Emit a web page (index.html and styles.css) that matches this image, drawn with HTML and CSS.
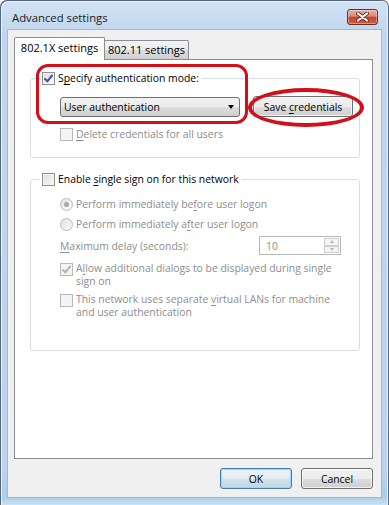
FILE: index.html
```html
<!DOCTYPE html>
<html lang="en">
<head>
    <meta charset="UTF-8">
    <meta name="viewport" content="width=device-width, initial-scale=1.0">
    <title>Advanced settings</title>
    <link rel="stylesheet" href="styles.css">
</head>
<body>

    <div class="window">
        <div class="titlebar">
            <span class="title">Advanced settings</span>
            <span class="close-btn">
                <svg width="13" height="10" viewBox="0 0 13 10">
                    <path d="M2 1.5 L11 8.5 M11 1.5 L2 8.5" stroke="#7a2a20" stroke-width="4" stroke-linecap="round"/>
                    <path d="M2 1.5 L11 8.5 M11 1.5 L2 8.5" stroke="#fff" stroke-width="2.2" stroke-linecap="round"/>
                </svg>
            </span>
        </div>

        <div class="client">
            <div class="tabs">
                <div class="tab tab-active">802.1X settings</div>
                <div class="tab">802.11 settings</div>
            </div>

            <div class="panel">
                <fieldset class="group group-auth">
                    <legend>
                        <span class="check">
                            <span class="box checked"></span>
                            <span>S<u>p</u>ecify authentication mode:</span>
                        </span>
                    </legend>
                    <div class="group-body">
                        <div class="mode-row">
                            <div class="combo">
                                <span>User authentication</span>
                                <span class="combo-arrow"></span>
                            </div>
                            <div class="btn btn-save"><span>Save <u>c</u>redentials</span></div>
                        </div>
                        <div class="check disabled row-delete">
                            <span class="box"></span>
                            <span><u>D</u>elete credentials for all users</span>
                        </div>
                    </div>
                </fieldset>

                <fieldset class="group group-sso">
                    <legend>
                        <span class="check">
                            <span class="box"></span>
                            <span>Enable <u>s</u>ingle sign on for this network</span>
                        </span>
                    </legend>
                    <div class="group-body">
                        <div class="check disabled">
                            <span class="radio selected"></span>
                            <span>Perform immediately be<u>f</u>ore user logon</span>
                        </div>
                        <div class="check disabled row-gap">
                            <span class="radio"></span>
                            <span>Perform immediately a<u>f</u>ter user logon</span>
                        </div>
                        <div class="delay-row disabled">
                            <span><u>M</u>aximum delay (seconds):</span>
                            <div class="spinner">
                                <span class="spinner-value">10</span>
                                <span class="spin-buttons">
                                    <span class="spin-up"></span>
                                    <span class="spin-down"></span>
                                </span>
                            </div>
                        </div>
                        <div class="check wrap disabled row-allow">
                            <span class="box checked"></span>
                            <span>A<u>l</u>low additional dialogs to be displayed during single<br>sign on</span>
                        </div>
                        <div class="check wrap disabled row-vlan">
                            <span class="box"></span>
                            <span>This network uses separate <u>v</u>irtual LANs for machine<br>and user authentication</span>
                        </div>
                    </div>
                </fieldset>

                <div class="mark mark-rect"></div>
                <div class="mark mark-oval"></div>
            </div>

            <div class="actions">
                <div class="btn btn-default"><span>OK</span></div>
                <div class="btn"><span>Cancel</span></div>
            </div>
        </div>
    </div>

</body>
</html>
```

FILE: styles.css
```css
* {
    box-sizing: border-box;
}
body {
    margin: 0;
    font-family: "Open Sans", sans-serif;
    font-size: 10.4px;
    color: #000;
    background: #fff;
}
u {
    text-decoration-thickness: 1px;
    text-underline-offset: 2px;
}
.window {
    width: 389px;
    height: 505px;
    background: linear-gradient(#d3e3f4, #c2d7ef 30px, #bcd3ed 470px, #a9cdea 497px, #c9e2f5);
    border-radius: 7px 7px 0 0;
    box-shadow: inset 1px 1px 0 #55677f, inset -1px 0 0 #55677f, inset 2px 2px 0 #e9f1fa, inset -2px 0 0 #e9f1fa;
    overflow: hidden;
}
.titlebar {
    height: 30px;
    display: flex;
    align-items: center;
    justify-content: space-between;
    padding: 4px 11px 0 12px;
}
.title {
    font-size: 11.3px;
    color: #1b1b1b;
}
.close-btn {
    width: 31px;
    height: 16px;
    border: 1px solid #6f2d26;
    border-radius: 3px;
    background: linear-gradient(#eab0a3, #d98b79 45%, #c24531 50%, #cf5c43);
    display: flex;
    align-items: center;
    justify-content: center;
    box-shadow: inset 0 0 0 1px rgba(255, 255, 255, 0.35);
}
.client {
    margin: 0 8px;
    height: 467px;
    background: #f0f0f0;
    padding: 7px 8px 0 6px;
    box-shadow: 0 0 0 1px #a3b7ce;
}
.tabs {
    display: flex;
    align-items: flex-end;
    height: 23px;
    margin-bottom: -1px;
}
.tab {
    width: 85px;
    height: 19px;
    margin-bottom: 1px;
    border: 1px solid #898c95;
    border-bottom: none;
    border-radius: 2px 2px 0 0;
    background: linear-gradient(#f3f3f3, #ebebeb 50%, #dddddd 51%, #cfcfcf);
    text-align: center;
    font-size: 11px;
    line-height: 17px;
    white-space: nowrap;
}
.tab-active {
    width: 91px;
    height: 23px;
    margin-bottom: 0;
    margin-right: -1px;
    background: #fff;
    line-height: 20px;
    position: relative;
    z-index: 1;
}
.panel {
    height: 400px;
    border: 1px solid #898c95;
    background: #fff;
    padding: 0 13px 0 15px;
    position: relative;
}
.group {
    width: 330px;
    min-width: 0;
    margin: 12px 0 0 0;
    padding: 0;
    border: 1px solid #d5dfe5;
    border-radius: 3px;
}
.group-sso {
    margin-top: 15px;
}
.group legend {
    margin-left: 9px;
    padding: 0 3px 0 2px;
    height: 13px;
}
.group-body {
    padding: 11px 0 16px 29px;
}
.group-sso .group-body {
    padding: 12px 0 31px 29px;
}
.check {
    display: flex;
    align-items: center;
    gap: 3px;
    height: 13px;
    line-height: 13px;
    white-space: nowrap;
}
.check.wrap {
    height: auto;
    align-items: flex-start;
}
.disabled {
    color: #8d8d8d;
}
.box {
    width: 13px;
    height: 13px;
    flex: none;
    border: 1px solid #8e8f8f;
    background: linear-gradient(135deg, #dcdcdc, #fbfbfb);
    box-shadow: inset 0 0 0 1px #f4f4f4;
    display: flex;
    align-items: center;
    justify-content: center;
}
.box.checked::after {
    content: "";
    width: 3px;
    height: 7px;
    margin-top: -2px;
    border-right: 2px solid #3e559a;
    border-bottom: 2px solid #3e559a;
    transform: rotate(40deg);
}
.disabled .box {
    border-color: #b8b8b8;
    background: #f4f4f4;
}
.disabled .box.checked::after {
    border-color: #b3b3b3;
}
.radio {
    width: 13px;
    height: 13px;
    flex: none;
    border: 1px solid #bcbcbc;
    border-radius: 50%;
    background: linear-gradient(135deg, #e2e2e2, #fafafa);
    display: flex;
    align-items: center;
    justify-content: center;
}
.radio.selected::after {
    content: "";
    width: 5px;
    height: 5px;
    border-radius: 50%;
    background: #a9a9a9;
}
.mode-row {
    display: flex;
    align-items: center;
    gap: 13px;
}
.combo {
    width: 180px;
    height: 20px;
    border: 1px solid #707070;
    border-radius: 3px;
    background: linear-gradient(#f2f2f2, #ebebeb 50%, #dddddd 51%, #cfcfcf);
    display: flex;
    align-items: center;
    justify-content: space-between;
    padding: 0 5px 0 3px;
}
.combo-arrow {
    width: 0;
    height: 0;
    border-left: 3.5px solid transparent;
    border-right: 3.5px solid transparent;
    border-top: 4px solid #000;
}
.btn {
    width: 72px;
    height: 21px;
    border: 1px solid #707070;
    border-radius: 3px;
    background: linear-gradient(#f2f2f2, #ebebeb 50%, #dddddd 51%, #cfcfcf);
    box-shadow: inset 0 0 0 1px rgba(255, 255, 255, 0.7);
    display: flex;
    align-items: center;
    justify-content: center;
    white-space: nowrap;
}
.btn-save {
    width: 100px;
}
.btn-default {
    border-color: #3c7fb1;
    background: linear-gradient(#eaf2f7, #e2edf4 50%, #d2e2ec 51%, #c3d6e3);
    box-shadow: inset 0 0 0 1px #9fd8f5;
}
.row-delete {
    margin-top: 11px;
}
.row-gap {
    margin-top: 7px;
}
.delay-row {
    display: flex;
    align-items: center;
    justify-content: space-between;
    margin: 5px 18px 0 0;
}
.spinner {
    width: 82px;
    height: 19px;
    border: 1px solid #b5b9bd;
    background: #fff;
    display: flex;
    align-items: center;
    justify-content: space-between;
    padding: 0 1px 0 6px;
}
.spin-buttons {
    display: flex;
    flex-direction: column;
    width: 15px;
    height: 15px;
}
.spin-up, .spin-down {
    flex: 1;
    border: 1px solid #cfcfcf;
    background: #f4f4f4;
    display: flex;
    align-items: center;
    justify-content: center;
}
.spin-up::after, .spin-down::after {
    content: "";
    border-left: 2.5px solid transparent;
    border-right: 2.5px solid transparent;
}
.spin-up::after {
    border-bottom: 3px solid #b5b5b5;
}
.spin-down::after {
    border-top: 3px solid #b5b5b5;
}
.row-allow {
    margin-top: 7px;
}
.row-vlan {
    margin-top: 5px;
}
.row-allow .box, .row-vlan .box {
    margin-top: 1px;
}
.mark {
    position: absolute;
    border: 3px solid #d2101a;
}
.mark-rect {
    left: 21px;
    top: 4px;
    width: 212px;
    height: 60px;
    border-radius: 12px;
}
.mark-oval {
    left: 233px;
    top: 28px;
    width: 116px;
    height: 39px;
    border-width: 4px;
    border-radius: 50%;
}
.actions {
    display: flex;
    justify-content: flex-end;
    gap: 9px;
    margin-top: 9px;
}
```
